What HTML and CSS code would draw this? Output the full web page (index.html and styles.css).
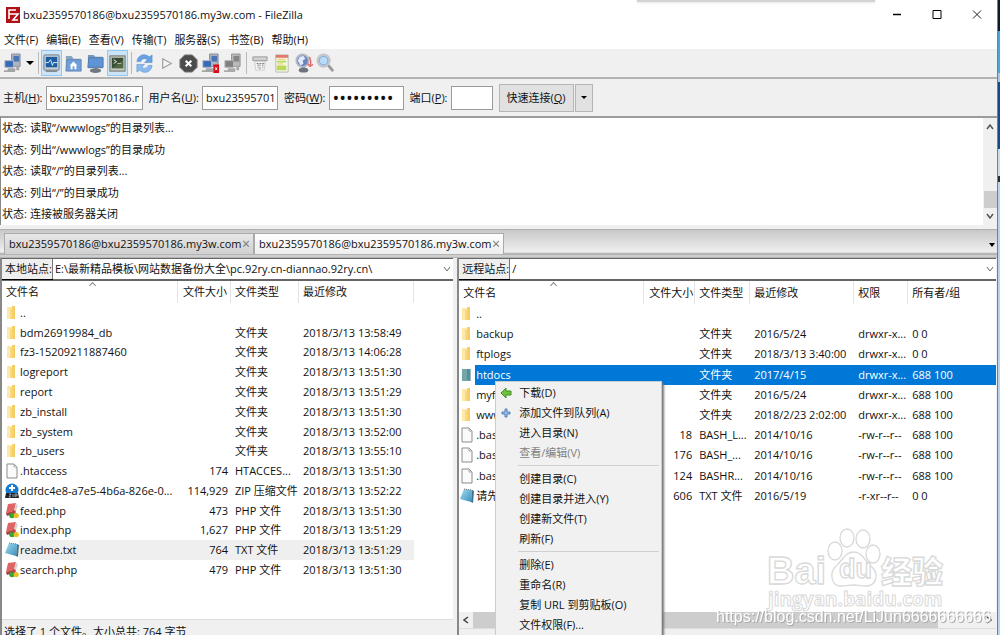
FILE: index.html
```html
<!DOCTYPE html>
<html lang="zh-CN">
<head>
<meta charset="utf-8">
<title>bxu2359570186@bxu2359570186.my3w.com - FileZilla</title>
<link rel="stylesheet" href="styles.css">
</head>
<body>
<svg class="defs" aria-hidden="true">
  <defs>
    <linearGradient id="g-folder" x1="0" y1="0" x2="1" y2="0"><stop offset="0" stop-color="#ffe7a0"/><stop offset="1" stop-color="#f3c95b"/></linearGradient>
    <linearGradient id="g-note" x1="0" y1="0" x2="1" y2="1"><stop offset="0" stop-color="#a5dcf0"/><stop offset="1" stop-color="#3a8fbc"/></linearGradient>
  </defs>
  <symbol id="i-folder" viewBox="0 0 14 16"><path d="M2 2h5v12H2z" fill="#ffe9ae"/><path d="M3 3l4 1V1h3v13H4L2 14z" fill="url(#g-folder)"/><path d="M4 4v10" stroke="#fff3cc"/></symbol>
  <symbol id="i-folder-sel" viewBox="0 0 14 16"><path d="M2 2h8v12H2z" fill="#73a6a8"/><path d="M7 2h2v11H7z" fill="#568e9a"/><path d="M10 2v12" stroke="#347b9a"/></symbol>
  <symbol id="i-file" viewBox="0 0 14 16"><path d="M2 1h7l3 3v11H2z" fill="#fafafa" stroke="#8b8b8b"/><path d="M9 1v3h3" fill="none" stroke="#aaa"/></symbol>
  <symbol id="i-zip" viewBox="0 0 14 16"><circle cx="7" cy="7" r="6.500" fill="#1479d1"/><path d="M7 2v6M4 5h6" stroke="#fff" stroke-width="2" fill="none"/><path d="M1 10h12l1 5H0z" fill="#1b2229"/><path d="M4 11h2l-2 3h2M8 11v3M10 14v-3h2v2h-2" stroke="#ccd" stroke-width=".7" fill="none"/></symbol>
  <symbol id="i-php" viewBox="0 0 14 16"><path d="M3 1l8-1-2 8-8 2z" fill="#e06464"/><path d="M1 10l8-2 1 2-8 3z" fill="#a83a3d"/><path d="M11 0l2 3-3 7-1-2z" fill="#d6d3d3"/><circle cx="7" cy="12.500" r="2.800" fill="#35a432"/><circle cx="11.200" cy="12.500" r="2.600" fill="#e9bf1d"/><circle cx="9" cy="9" r="1.800" fill="#c93d3d"/></symbol>
  <symbol id="i-note" viewBox="0 0 14 16"><path d="M4 1l8 1-1 12-11-3z" fill="url(#g-note)"/><path d="M12 2l2 1-1 12-2-1z" fill="#3e7390"/><path d="M4 1l8 1" stroke="#777" stroke-dasharray="1 1"/></symbol>
  <symbol id="i-hosts" viewBox="0 0 20 22"><path d="M9 1h9v13H9z" fill="#aeb6bf" stroke="#858c94"/><path d="M11 3h6v6h-6z" fill="#4c74b4"/><path d="M2 8h9v7H2z" fill="#3769b6" stroke="#aab5c4"/><path d="M5 16h8v3H5zM1 18h11l1 2H1zM14 14h3v4h-3z" fill="#a4a4a4"/></symbol>
  <symbol id="i-hosts-off" viewBox="0 0 20 22"><path d="M9 1h9v13H9z" fill="#bbb" stroke="#929292"/><path d="M11 3h6v6h-6z" fill="#858585"/><path d="M2 8h9v7H2z" fill="#808080" stroke="#b4b4b4"/><path d="M5 16h8v3H5zM1 18h11l1 2H1zM14 14h3v4h-3z" fill="#aaa"/></symbol>
  <symbol id="i-log" viewBox="0 0 20 22"><rect x="2" y="2" width="16" height="16" rx="1" fill="#c9ced4" stroke="#697885"/><path d="M4 4h12v11H4z" fill="#1f5da3"/><path d="M4 10h3l2-3 2 6 1-3h4" fill="none" stroke="#d4f4ed"/><path d="M4 18h12v2H4z" fill="#858b91"/></symbol>
  <symbol id="i-home" viewBox="0 0 20 22"><path d="M2 3h6l2 3h8v13H2z" fill="#8aa3c1"/><path d="M3 7h15v12H2z" fill="#6f9fd8" stroke="#6288b4"/><path d="M10 9l4 4h-1v4h-2v-3H9v3H7v-4H6z" fill="#fff"/></symbol>
  <symbol id="i-remote" viewBox="0 0 20 22"><path d="M2 2h6l2 2h8v12H2z" fill="#7898be"/><path d="M3 5h15v10H2z" fill="#5f93d6" stroke="#507cad"/><path d="M9 15h3v3H9z" fill="#888"/><ellipse cx="10" cy="18.500" rx="6" ry="2.400" fill="#707882"/></symbol>
  <symbol id="i-queue" viewBox="0 0 20 22"><rect x="2" y="3" width="16" height="16" fill="#c1c5bd" stroke="#697062"/><path d="M4 5h12v11H4z" fill="#364a34"/><path d="M6 7l3 2-3 2M10 11h4" fill="none" stroke="#f2f6e7"/><path d="M4 16l12-9v9z" fill="#688256" opacity=".5"/></symbol>
  <symbol id="i-refresh" viewBox="0 0 20 22"><path d="M2 9C3 1 11 0 15 4l3-2v8h-8l3-3c-3-2-6-1-7 2z" fill="#68a0e4" stroke="#5b8ccb" stroke-width=".6"/><path d="M18 13c-1 8-9 9-13 5l-3 2v-8h8l-3 3c3 2 6 1 7-2z" fill="#8bbaf0" stroke="#5b8ccb" stroke-width=".6"/></symbol>
  <symbol id="i-play" viewBox="0 0 20 22"><path d="M6 6l9 5-9 5z" fill="#f4f4f4" stroke="#a0a0a0" stroke-width="1.300"/></symbol>
  <symbol id="i-stop" viewBox="0 0 20 22"><path d="M6 2h8l5 5v8l-5 5H6l-5-5V7z" fill="#4c4c4c" stroke="#777"/><path d="M7 8l6 6m0-6l-6 6" stroke="#fff" stroke-width="2.200"/></symbol>
  <symbol id="i-badge" viewBox="0 0 20 22"><path d="M9 1h9v13H9z" fill="#aeb6bf" stroke="#858c94"/><path d="M11 3h6v6h-6z" fill="#4c74b4"/><path d="M2 8h9v7H2z" fill="#3769b6" stroke="#aab5c4"/><path d="M5 16h8v3H5zM1 18h11l1 2H1z" fill="#a4a4a4"/><path d="M13 12h6v9h-6z" fill="#d90c19"/><path d="M15 15l2 3m0-3l-2 3" stroke="#fff"/></symbol>
  <symbol id="i-filter" viewBox="0 0 20 22"><path d="M3 4h15v4H3z" fill="#d1d1d1" stroke="#999"/><path d="M5 9h11l-1 9H6z" fill="#f6f6f6" stroke="#ccc"/><path d="M7 11h8M8.500 12v4m2-4v5m3-5v4" stroke="#777" stroke-dasharray="2 1"/></symbol>
  <symbol id="i-compare" viewBox="0 0 20 22"><path d="M4 2h13v18H4z" fill="#f7f7eb" stroke="#b9b9ad"/><path d="M4 2h13v3H4z" fill="#df7a6d"/><path d="M5 8h10v2H5zM5 13h10v5H5z" fill="#b1dc55"/><path d="M6 6.500h8M6 11.500h6m-6 4h6" stroke="#eac34f"/></symbol>
  <symbol id="i-sync" viewBox="0 0 20 22"><circle cx="9" cy="8" r="6.500" fill="#6b83bb" stroke="#b4bac5" stroke-width="2"/><path d="M6 4l4-1 2 3-3 2 1 3-3 2-3-5z" fill="#e1ebfa"/><path d="M8 15h4v3H8z" fill="#888"/><ellipse cx="10" cy="18" rx="5" ry="2.500" fill="#6b737b"/><path d="M16 4c2 3 2 6 1 9m-3-2l3 3 3-2" fill="none" stroke="#e36a6a" stroke-width="1.500"/></symbol>
  <symbol id="i-find" viewBox="0 0 20 22"><circle cx="8" cy="8" r="6" fill="#bcdcf9" stroke="#c3c8ce" stroke-width="3"/><circle cx="8" cy="8" r="4.500" fill="#b9dbfa" stroke="#7ba7d8"/><path d="M13 13l5 6" stroke="#999" stroke-width="3"/></symbol>
</svg>

<div class="desktop">
<main class="app">
  <header class="titlebar">
    <svg class="logo" viewBox="0 0 14 16"><path d="M0 0h14v16H0z" fill="#b01116"/><path d="M3 12V3h7M3 7h4M7 7h5l-5 6h5" fill="none" stroke="#fff" stroke-width="1.600"/></svg>
    <h1 class="title">bxu2359570186@bxu2359570186.my3w.com - FileZilla</h1>
    <span class="top-shade"></span>
    <div class="winbtns">
      <button aria-label="最小化"><svg viewBox="0 0 10 10"><path d="M1 5h8" stroke="#000" stroke-width="1.500"/></svg></button>
      <button aria-label="最大化"><svg viewBox="0 0 10 10"><path d="M1 1h8v8H1z" fill="none" stroke="#000"/></svg></button>
      <button aria-label="关闭"><svg viewBox="0 0 10 10"><path d="M1 1l8 8m0-8L1 9" stroke="#222"/></svg></button>
    </div>
  </header>

  <nav class="menubar">
    <button>文件(F)</button><button>编辑(E)</button><button>查看(V)</button><button>传输(T)</button><button>服务器(S)</button><button>书签(B)</button><button>帮助(H)</button>
  </nav>

  <div class="toolbar">
    <button aria-label="站点管理器"><svg><use href="#i-hosts"/></svg></button>
    <button class="drop" aria-label="站点列表"><i class="tri"></i></button>
    <span class="sep"></span>
    <button class="on" aria-label="消息日志"><svg><use href="#i-log"/></svg></button>
    <button aria-label="本地目录树"><svg><use href="#i-home"/></svg></button>
    <button aria-label="远程目录树"><svg><use href="#i-remote"/></svg></button>
    <button class="on" aria-label="传输队列"><svg><use href="#i-queue"/></svg></button>
    <span class="sep"></span>
    <button aria-label="刷新"><svg><use href="#i-refresh"/></svg></button>
    <button aria-label="处理队列"><svg><use href="#i-play"/></svg></button>
    <button aria-label="取消"><svg><use href="#i-stop"/></svg></button>
    <button aria-label="断开"><svg><use href="#i-badge"/></svg></button>
    <button aria-label="重新连接"><svg><use href="#i-hosts-off"/></svg></button>
    <span class="sep"></span>
    <button aria-label="过滤器"><svg><use href="#i-filter"/></svg></button>
    <button aria-label="目录对比"><svg><use href="#i-compare"/></svg></button>
    <button aria-label="同步浏览"><svg><use href="#i-sync"/></svg></button>
    <button aria-label="查找"><svg><use href="#i-find"/></svg></button>
  </div>

  <form class="quick">
    <label for="host">主机(<u>H</u>):</label><input id="host" value="bxu2359570186.my3w.com">
    <label for="user">用户名(<u>U</u>):</label><input id="user" value="bxu2359570186">
    <label for="pass">密码(<u>W</u>):</label><input id="pass" type="password" value="123456789">
    <label for="port">端口(<u>P</u>):</label><input id="port">
    <button type="button">快速连接(<u>Q</u>)</button><button type="button" class="more" aria-label="历史"><i class="tri"></i></button>
  </form>

  <section class="log">
    <div class="lines">
      <p><span>状态:</span>读取“/wwwlogs”的目录列表...</p>
      <p><span>状态:</span>列出“/wwwlogs”的目录成功</p>
      <p><span>状态:</span>读取“/”的目录列表...</p>
      <p><span>状态:</span>列出“/”的目录成功</p>
      <p><span>状态:</span>连接被服务器关闭</p>
    </div>
    <div class="vbar">
      <svg viewBox="0 0 8 6"><path d="M1 5l3-4 3 4" fill="none" stroke="#555" stroke-width="1.500"/></svg>
      <span class="thumb"></span>
      <svg viewBox="0 0 8 6"><path d="M1 1l3 4 3-4" fill="none" stroke="#555" stroke-width="1.500"/></svg>
    </div>
  </section>

  <div class="tabs">
    <button class="tab">bxu2359570186@bxu2359570186.my3w.com <span>×</span></button>
    <button class="tab active">bxu2359570186@bxu2359570186.my3w.com <span>×</span></button>
    <i class="tri"></i>
  </div>

  <div class="panes">
    <section class="pane local">
      <div class="path"><label for="lp">本地站点:</label><select id="lp"><option>E:\最新精品模板\网站数据备份大全\pc.92ry.cn-diannao.92ry.cn\</option></select></div>
      <div class="list">
      <table>
        <colgroup><col class="c-ico"><col class="c-name"><col class="c-size"><col class="c-type"><col class="c-date"><col></colgroup>
        <thead><tr><th colspan="2">文件名<i class="sort"></i></th><th class="num">文件大小</th><th>文件类型</th><th>最近修改</th><th></th></tr></thead>
        <tbody>
        <tr><td><svg><use href="#i-folder"/></svg></td><td>..</td><td></td><td></td><td></td></tr>
        <tr><td><svg><use href="#i-folder"/></svg></td><td>bdm26919984_db</td><td></td><td>文件夹</td><td>2018/3/13 13:58:49</td></tr>
        <tr><td><svg><use href="#i-folder"/></svg></td><td>fz3-15209211887460</td><td></td><td>文件夹</td><td>2018/3/13 14:06:28</td></tr>
        <tr><td><svg><use href="#i-folder"/></svg></td><td>logreport</td><td></td><td>文件夹</td><td>2018/3/13 13:51:30</td></tr>
        <tr><td><svg><use href="#i-folder"/></svg></td><td>report</td><td></td><td>文件夹</td><td>2018/3/13 13:51:29</td></tr>
        <tr><td><svg><use href="#i-folder"/></svg></td><td>zb_install</td><td></td><td>文件夹</td><td>2018/3/13 13:51:30</td></tr>
        <tr><td><svg><use href="#i-folder"/></svg></td><td>zb_system</td><td></td><td>文件夹</td><td>2018/3/13 13:52:00</td></tr>
        <tr><td><svg><use href="#i-folder"/></svg></td><td>zb_users</td><td></td><td>文件夹</td><td>2018/3/13 13:55:10</td></tr>
        <tr><td><svg><use href="#i-file"/></svg></td><td>.htaccess</td><td>174</td><td>HTACCES...</td><td>2018/3/13 13:51:30</td></tr>
        <tr><td><svg><use href="#i-zip"/></svg></td><td>ddfdc4e8-a7e5-4b6a-826e-0...</td><td>114,929</td><td>ZIP 压缩文件</td><td>2018/3/13 13:52:22</td></tr>
        <tr><td><svg><use href="#i-php"/></svg></td><td>feed.php</td><td>473</td><td>PHP 文件</td><td>2018/3/13 13:51:30</td></tr>
        <tr><td><svg><use href="#i-php"/></svg></td><td>index.php</td><td>1,627</td><td>PHP 文件</td><td>2018/3/13 13:51:29</td></tr>
        <tr class="focus"><td><svg><use href="#i-note"/></svg></td><td>readme.txt</td><td>764</td><td>TXT 文件</td><td>2018/3/13 13:51:29</td></tr>
        <tr><td><svg><use href="#i-php"/></svg></td><td>search.php</td><td>479</td><td>PHP 文件</td><td>2018/3/13 13:51:30</td></tr>
        </tbody>
      </table>
      </div>
      <footer class="status">选择了 1 个文件。大小总共: 764 字节</footer>
    </section>

    <section class="pane remote">
      <div class="path"><label for="rp">远程站点:</label><select id="rp"><option>/</option></select></div>
      <div class="list">
      <table>
        <colgroup><col class="c-ico"><col class="c-name"><col class="c-size"><col class="c-type"><col class="c-date"><col class="c-perm"><col></colgroup>
        <thead><tr><th colspan="2">文件名<i class="sort"></i></th><th class="num">文件大小</th><th>文件类型</th><th>最近修改</th><th>权限</th><th>所有者/组</th></tr></thead>
        <tbody>
        <tr><td><svg><use href="#i-folder"/></svg></td><td>..</td><td></td><td></td><td></td><td></td><td></td></tr>
        <tr><td><svg><use href="#i-folder"/></svg></td><td>backup</td><td></td><td>文件夹</td><td>2016/5/24</td><td>drwxr-x...</td><td>0 0</td></tr>
        <tr><td><svg><use href="#i-folder"/></svg></td><td>ftplogs</td><td></td><td>文件夹</td><td>2018/3/13 3:40:00</td><td>drwxr-x...</td><td>0 0</td></tr>
        <tr class="selected"><td><svg><use href="#i-folder-sel"/></svg></td><td>htdocs</td><td></td><td>文件夹</td><td>2017/4/15</td><td>drwxr-x...</td><td>688 100</td></tr>
        <tr><td><svg><use href="#i-folder"/></svg></td><td>myf</td><td></td><td>文件夹</td><td>2016/5/24</td><td>drwxr-x...</td><td>688 100</td></tr>
        <tr><td><svg><use href="#i-folder"/></svg></td><td>www</td><td></td><td>文件夹</td><td>2018/2/23 2:02:00</td><td>drwxr-x...</td><td>688 100</td></tr>
        <tr><td><svg><use href="#i-file"/></svg></td><td>.bas</td><td>18</td><td>BASH_L...</td><td>2014/10/16</td><td>-rw-r--r--</td><td>688 100</td></tr>
        <tr><td><svg><use href="#i-file"/></svg></td><td>.bas</td><td>176</td><td>BASH_...</td><td>2014/10/16</td><td>-rw-r--r--</td><td>688 100</td></tr>
        <tr><td><svg><use href="#i-file"/></svg></td><td>.bas</td><td>124</td><td>BASHR...</td><td>2014/10/16</td><td>-rw-r--r--</td><td>688 100</td></tr>
        <tr><td><svg><use href="#i-note"/></svg></td><td>请先</td><td>606</td><td>TXT 文件</td><td>2016/5/19</td><td>-r-xr--r--</td><td>0 0</td></tr>
        </tbody>
      </table>
      </div>
      <div class="hbar">
        <svg viewBox="0 0 6 8"><path d="M5 1L1 4l4 3" fill="none" stroke="#444" stroke-width="1.500"/></svg>
        <span class="thumb"></span>
        <svg viewBox="0 0 6 8"><path d="M1 1l4 3-4 3" fill="none" stroke="#444" stroke-width="1.500"/></svg>
      </div>
      <footer class="strip"></footer>

      <div class="context">
        <button><svg viewBox="0 0 12 12"><path d="M1 6l5-5v3h5v4H6v3z" fill="#6fc33c" stroke="#458c29"/></svg>下载(D)</button>
        <button><svg viewBox="0 0 12 12"><path d="M5 2h2v3h3v2H7v3H5V7H2V5h3z" fill="#9bbde8" stroke="#557fbb"/></svg>添加文件到队列(A)</button>
        <button>进入目录(N)</button>
        <button disabled>查看/编辑(V)</button>
        <hr>
        <button>创建目录(C)</button>
        <button>创建目录并进入(Y)</button>
        <button>创建新文件(T)</button>
        <button>刷新(F)</button>
        <hr>
        <button>删除(E)</button>
        <button>重命名(R)</button>
        <button>复制 URL 到剪贴板(O)</button>
        <button>文件权限(F)...</button>
      </div>
    </section>
  </div>
</main>
<aside class="edge"></aside>
</div>

<svg class="mark" viewBox="0 0 290 110">
  <g fill="#fff" stroke="#d9d9d9" stroke-width="1.300">
    <text x="57" y="59" class="m-bai">Bai</text>
    <ellipse cx="125" cy="26" rx="7" ry="9"/><ellipse cx="137" cy="13" rx="7" ry="9"/><ellipse cx="153" cy="14" rx="7" ry="9"/><ellipse cx="163" cy="29" rx="7" ry="9"/>
    <path d="M144 27c8 0 11 9 17 14 9 8 5 20-5 20-6 0-8-1-12-1s-8 1-13 1c-10 0-12-13-5-20 7-6 9-14 18-14z"/>
    <text x="129" y="53" class="m-du">du</text>
    <text x="171" y="58" class="m-cn">经验</text>
    <text x="58" y="81" class="m-url">jingyan.baidu.com</text>
  </g>
  <text x="6" y="97" class="m-blog">https://blog.csdn.net/LiJun6666666666</text>
</svg>
</body>
</html>
```
FILE: styles.css
```css
* { box-sizing: border-box; }
body {
  margin: 0;
  height: 100vh;
  overflow: hidden;
  font: 11px/18px "Open Sans", "Noto Sans CJK SC", sans-serif;
  color: #111;
  background: #f0f0f0;
}
button, input, select { font: inherit; color: inherit; padding: 0; margin: 0; border: 0; background: none; border-radius: 0; }
p, h1 { margin: 0; }
.defs { position: absolute; width: 0; height: 0; }
.desktop { display: flex; height: 100vh; }
.app { flex: 1; min-width: 0; display: flex; flex-direction: column; }
.edge {
  width: 3px;
  border-left: 1px solid #3f8fd0;
  background: linear-gradient(#0d1c2c 31px, #4aa5de 31px 73px, #a9c5e0 73px 82px, #164a8c 82px 149px, #c9dcee 149px 176px, #203040 176px 182px, #b9d3ec 182px);
}
.tri { width: 0; height: 0; border: 4px solid transparent; border-top-color: #000; border-bottom: 0; }

.titlebar { display: flex; align-items: center; height: 29px; padding-left: 6px; background: #fff; position: relative; }
.logo { width: 14px; height: 16px; }
.title { font-size: 11px; font-weight: 400; margin-left: 3px; flex: 1; }
.top-shade { position: absolute; right: 122px; top: 0; width: 238px; height: 2px; background: #d4d4d4; box-shadow: 0 0 3px #ccc; }
.winbtns { display: flex; }
.winbtns button { width: 40px; height: 28px; display: flex; align-items: center; justify-content: center; }
.winbtns svg { width: 10px; height: 11px; }

.menubar { display: flex; gap: 8px; height: 20px; padding: 2px 4px 0; background: #fff; }

.toolbar { display: flex; align-items: center; height: 30px; padding-left: 2px; border-bottom: 2px solid #b3b3b3; }
.toolbar button { width: 21px; height: 26px; margin-right: 1px; display: flex; align-items: center; justify-content: center; flex: none; }
.toolbar svg { width: 19px; height: 21px; flex: none; }
.toolbar .on { background: #cce4f7; border: 1px solid #90c8f6; }
.toolbar .drop { width: 11px; }
.sep { width: 1px; height: 22px; background: #b9b9b9; margin: 0 2px; }

.quick { display: flex; align-items: center; height: 37px; padding-left: 3px; }
.quick label { white-space: nowrap; }
.quick input { width: 97px; height: 24px; border: 1px solid #9a9a9a; background: #fff; padding: 0 3px; margin: 0 6px 0 3px; }
.quick #user { width: 76px; }
.quick #pass { width: 75px; font-size: 18px; }
.quick #port { width: 42px; }
.quick button { height: 28px; width: 75px; background: #e1e1e1; border: 1px solid #b5b5b5; }
.quick .more { width: 18px; margin-left: 1px; display: flex; align-items: center; justify-content: center; }
.more .tri { border-width: 3px 3px 0; }

.log { display: flex; height: 109px; border-top: 2px solid #9b9b9b; border-left: 1px solid #888; background: #fff; }
.lines { flex: 1; display: flex; flex-direction: column; justify-content: space-between; padding: 1px 0 2px 1px; }
.lines span { display: inline-block; width: 28px; }
.vbar { width: 14px; background: #f0f0f0; display: flex; flex-direction: column; align-items: center; padding: 6px 0; }
.vbar svg { width: 8px; height: 6px; }
.vbar .thumb { width: 13px; height: 17px; margin-top: auto; margin-bottom: 5px; background: #cdcdcd; }

.tabs { display: flex; align-items: flex-end; height: 29px; margin-top: 4px; padding: 0 2px 4px 4px; border-top: 1px solid #b0b0b0; background: linear-gradient(#c8c8c8, #efefef 22px, #a5a5a5 24px, #dcdcdc 26px, #a5a5a5 28px); }
.tab { height: 21px; width: 250px; padding: 0 3px 0 4px; display: flex; justify-content: space-between; align-items: center; border: 1px solid #aaa; border-bottom: 0; background: linear-gradient(#e8e8e8, #d0d0d0); white-space: nowrap; }
.tab span { color: #777; font-size: 14px; }
.tab.active { background: linear-gradient(#fff, #eee); }
.tabs .tri { margin: 0 0 7px auto; border-width: 4px 3px 0; }

.panes { flex: 1; min-height: 0; display: flex; gap: 4px; padding-right: 1px; }
.pane { display: flex; flex-direction: column; min-width: 0; min-height: 0; border-left: 2px solid #888; }
.local { flex: 453 1 0; }
.remote { flex: 539 1 0; position: relative; }
.path { display: flex; height: 23px; flex: none; border-top: 1px solid #666; border-bottom: 2px solid #666; background: #fff; }
.path label { width: 51px; padding-left: 3px; line-height: 20px; background: #efefef; border-right: 1px solid #777; box-shadow: 0 1px #000; white-space: nowrap; }
.path select {
  appearance: none; flex: 1; min-width: 0; padding-left: 2px; background: #fff
  url("data:image/svg+xml,%3Csvg xmlns='http://www.w3.org/2000/svg' width='8' height='6'%3E%3Cpath d='M1 1l3 4 3-4' fill='none' stroke='%23666'/%3E%3C/svg%3E") no-repeat right 2px center;
}
.list { flex: 1; min-height: 0; background: #fff; overflow: hidden; }
table { width: 100%; height: 299px; table-layout: fixed; border-collapse: separate; border-spacing: 0; }
.remote table { height: 225px; }
thead tr { height: 22px; }
th, td { padding: 0 0 0 4px; text-align: left; white-space: nowrap; overflow: hidden; font-weight: 400; }
th { height: 22px; border-right: 1px solid #e3e3e3; position: relative; line-height: 18px; }
.remote th { height: 23px; }
th:last-child { border-right: 0; }
td { line-height: 18px; }
td:nth-child(1) { padding-left: 3px; }
td:nth-child(2) { padding-left: 1px; }
td:nth-child(3), .num { text-align: right; padding: 0 3px 0 0; }
.remote .num { padding-right: 1px; }
td svg { display: block; width: 14px; height: 16px; }
.remote td:nth-child(1) { padding-left: 1px; }
.c-ico { width: 17px; }
.c-name { width: 159px; }
.c-size { width: 53px; }
.c-type { width: 68px; }
.c-date { width: 115px; }
.remote .c-ico { width: 16px; }
.remote .c-name { width: 169px; }
.remote .c-size { width: 51px; }
.remote .c-type { width: 55px; }
.remote .c-date { width: 104px; }
.c-perm { width: 54px; }
.sort { position: absolute; left: 50%; top: 2px; width: 5px; height: 5px; border: solid #888; border-width: 1px 0 0 1px; transform: rotate(45deg); }
.focus td:nth-child(n+2) { background: #efefef; }
.selected td:nth-child(n+2) { background: #0078d7; color: #fff; }
.status { height: 16px; flex: none; line-height: 23px; padding-left: 2px; border-top: 1px solid #ddd; white-space: nowrap; overflow: hidden; }
.hbar { height: 16px; flex: none; display: flex; align-items: center; padding: 0 4px; gap: 4px; background: #f0f0f0; }
.hbar svg { width: 6px; height: 8px; }
.hbar .thumb { height: 16px; flex: 1; margin: 0 44px 0 0; background: #cdcdcd; }
.strip { height: 7px; flex: none; border-top: 1px solid #ddd; }

.context { position: absolute; left: 36px; top: 123px; width: 167px; height: 270px; padding: 1px 0; background: #f1f1f1; border: 1px solid #ccc; box-shadow: 2px 2px 2px #777; }
.context button { display: block; position: relative; width: 100%; height: 20px; padding-left: 23px; line-height: 18px; text-align: left; white-space: nowrap; }
.context svg { position: absolute; left: 4px; top: 4px; width: 12px; height: 12px; }
.context button:disabled { color: #808080; }
.context hr { margin: 2px 2px 3px 22px; border: 0; border-top: 1px solid #d0d0d0; }

.mark { position: absolute; right: 0; bottom: 0; width: 290px; height: 110px; pointer-events: none; }
.m-bai { font: 700 38px "Liberation Sans", sans-serif; }
.m-du { font: 700 27px "Liberation Sans", sans-serif; }
.m-cn { font: 900 31px "Noto Sans CJK SC", sans-serif; }
.m-url { font: 700 19px "Open Sans", sans-serif; stroke-width: 1px; }
.m-blog { font: 16px "Liberation Sans", sans-serif; fill: #fff; filter: drop-shadow(1px 1px 0 #aaa); }
```
